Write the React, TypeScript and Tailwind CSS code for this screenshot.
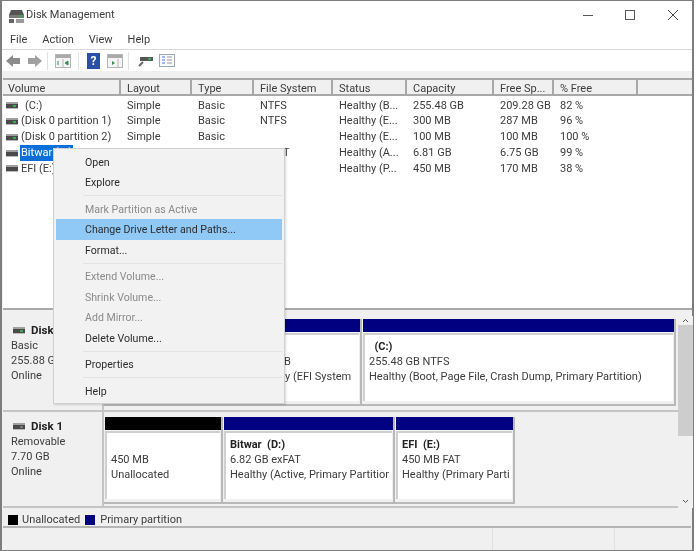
import React from "react";

const font = "[font-family:'Roboto','Noto_Sans',sans-serif]";

function Drive({ led = "#35b04a" }: { led?: string }) {
  return (
    <svg width="12" height="7" viewBox="0 0 12 7" className="shrink-0">
      <rect x="0" y="0" width="12" height="2" fill="#a0a0a0" />
      <rect x="0" y="2" width="12" height="4" fill="#4a4a4a" />
      <rect x="7" y="3" width="3" height="2" fill={led} />
      <rect x="0" y="6" width="12" height="1" fill="#bbb" />
    </svg>
  );
}

const cols = [118, 71, 62, 79, 74, 87, 60, 84];
const heads = ["Volume", "Layout", "Type", "File System", "Status", "Capacity", "Free Sp...", "% Free"];
const rows = [
  ["(C:)", "Simple", "Basic", "NTFS", "Healthy (B...", "255.48 GB", "209.28 GB", "82 %"],
  ["(Disk 0 partition 1)", "Simple", "Basic", "NTFS", "Healthy (E...", "300 MB", "287 MB", "96 %"],
  ["(Disk 0 partition 2)", "Simple", "Basic", "", "Healthy (E...", "100 MB", "100 MB", "100 %"],
  ["Bitwar (D:)", "Simple", "Basic", "exFAT", "Healthy (A...", "6.81 GB", "6.75 GB", "99 %"],
  ["EFI (E:)", "Simple", "Basic", "FAT", "Healthy (P...", "450 MB", "170 MB", "38 %"],
];

function Partition({ w, bar = "bg-[#000080]", title, lines }: { w: number; bar?: string; title?: string; lines: string[] }) {
  return (
    <div style={{ width: w }} className="shrink-0 flex flex-col h-[87px] border-r-2 border-b-2 border-[#b8b8b8]">
      <div className={`h-[13px] ml-[1px] ${bar}`} />
      <div className="flex-1 mt-[1px] mb-[3px] mr-[1px] ml-[1px] border-l-2 border-t-2 border-[#d0d0d0] bg-white pl-[4px] pr-[3px] pt-[4px]">
        <div className="overflow-hidden h-full text-[11px] leading-[15px] whitespace-nowrap text-[#3c3c3c]">
          <div className="h-[15px] font-bold text-[#222] whitespace-pre">{title}</div>
          {lines.map((l) => (
            <div key={l}>{l}</div>
          ))}
        </div>
      </div>
    </div>
  );
}

function DiskRow({ name, info, children, led, pt }: { name: string; info: string[]; children: React.ReactNode; led?: string; pt: string }) {
  return (
    <div className="h-[96px] flex shrink-0">
      <div className="w-[101px] shrink-0 border-r-2 border-b-2 border-[#c4c4c4] bg-[#f0f0f0] pl-[8px] pt-[6px] text-[11px] leading-[15px] text-[#3c3c3c]">
        <div className="flex items-center gap-[6px] h-[16px] pl-[2px] font-bold text-[#222] text-[11.5px]">
          <Drive led={led} />
          <span>{name}</span>
        </div>
        {info.map((l) => (
          <div key={l}>{l}</div>
        ))}
      </div>
      <div className={`flex-1 flex border-b-2 border-[#c4c4c4] ${pt}`}>{children}</div>
    </div>
  );
}

function Item({ children, dim, active }: { children: string; dim?: boolean; active?: boolean }) {
  return (
    <div
      className={`h-[20.500px] leading-[22px] pl-[29px] text-[10.600px] whitespace-nowrap ${dim ? "text-[#8a8a8a]" : "text-[#2c2c2c]"} ${active ? "bg-[#90c8f6]" : ""}`}
    >
      {children}
    </div>
  );
}

function Sep() {
  return <div className="h-[1px] ml-[27px] my-[2.500px] bg-[#e2e2e2]" />;
}

export default function App() {
  return (
    <div className={`w-[696px] h-[551px] bg-white overflow-hidden relative blur-[0.3px] ${font}`}>
      <div className="w-[694px] h-[551px] border-x-2 border-y border-[#7d7d7d] flex flex-col bg-[#f0f0f0]">
        {/* title */}
        <div className="h-[29px] bg-white flex items-center shrink-0 pl-[6px] text-[11px] text-[#3c3c3c]">
          <svg width="17" height="14" viewBox="0 0 17 14" className="mr-[1px]">
            <path d="M3 1h11l2 5H1z" fill="#555" />
            <rect x="1" y="6" width="15" height="3" fill="#7a7a7a" />
            <rect x="11" y="6" width="3" height="2" fill="#35b04a" />
            <rect x="1" y="10" width="5" height="4" fill="#666" />
            <rect x="8" y="10" width="8" height="4" fill="#999" />
          </svg>
          <span>Disk Management</span>
          <div className="ml-auto flex items-center h-full pb-[2px]">
            <svg width="10" height="10" viewBox="0 0 10 10" className="mr-[32px]">
              <path d="M0 5.500h10" stroke="#555" />
            </svg>
            <svg width="10" height="10" viewBox="0 0 10 10" className="mr-[33px]">
              <rect x="0.500" y="0.500" width="9" height="9" fill="none" stroke="#555" />
            </svg>
            <svg width="10" height="10" viewBox="0 0 10 10" className="mr-[14px]">
              <path d="M0 0l10 10M10 0L0 10" stroke="#444" />
            </svg>
          </div>
        </div>
        {/* menu */}
        <div className="h-[20px] bg-white border-b border-[#d9d9d9] flex items-center shrink-0 pl-[8px] gap-[15px] text-[11px] text-[#3c3c3c] pt-[2px]">
          <span>File</span>
          <span>Action</span>
          <span>View</span>
          <span>Help</span>
        </div>
        {/* toolbar */}
        <div className="h-[21px] bg-white flex items-center shrink-0 pl-[3px] relative">
          <svg width="38" height="14" viewBox="0 0 38 14">
            <path d="M1 7l7-6v3h7v6H8v3z" fill="#8c8c8c" />
            <path d="M37 7l-7-6v3h-7v6h7v3z" fill="#a0a0a0" />
          </svg>
          <div className="w-[1px] h-[18px] bg-[#e2e2e2] ml-[4px] mr-[7px]" />
          <svg width="16" height="14" viewBox="0 0 16 14">
            <rect x="0.500" y="0.500" width="15" height="13" fill="#f4f4f4" stroke="#b5b5b5" />
            <rect x="1" y="1" width="14" height="3" fill="#aaa" />
            <path d="M8 5v8" stroke="#b5b5b5" />
            <path d="M3 7v4M13 7l-3 2 3 2z" stroke="#3a8a5a" fill="#3a8a5a" />
          </svg>
          <div className="w-[1px] h-[18px] bg-[#e2e2e2] ml-[7px] mr-[8px]" />
          <div className="w-[13px] h-[16px] bg-[#2a4fa8] text-white text-[12px] leading-[16px] text-center font-bold">?</div>
          <svg width="16" height="14" viewBox="0 0 16 14" className="ml-[7px]">
            <rect x="0.500" y="0.500" width="15" height="13" fill="#f4f4f4" stroke="#b5b5b5" />
            <rect x="1" y="1" width="14" height="3" fill="#aaa" />
            <path d="M11 5v8" stroke="#b5b5b5" />
            <path d="M5 7l3 2-3 2z" fill="#3a8a5a" />
          </svg>
          <div className="w-[1px] h-[18px] bg-[#e2e2e2] ml-[5px] mr-[9px]" />
          <svg width="15" height="14" viewBox="0 0 15 14">
            <rect x="2" y="3" width="13" height="4" fill="#555" />
            <rect x="10" y="4" width="3" height="2" fill="#35b04a" />
            <path d="M5 8L1 12" stroke="#666" strokeWidth="2" />
          </svg>
          <svg width="16" height="14" viewBox="0 0 16 14" className="ml-[6px]">
            <rect x="0.500" y="0.500" width="15" height="12" fill="#fafafa" stroke="#9ab" />
            <path d="M3 3h3M3 6h3M3 9h3" stroke="#3a7fc8" />
            <path d="M8 3h5M8 6h5M8 9h5" stroke="#999" />
          </svg>
        </div>
        {/* list */}
        <div className="h-[239px] shrink-0 bg-[#f0f0f0] pt-[7px] pl-[1px] flex flex-col">
          <div className="flex-1 bg-white border-b-2 border-[#a8a8a8] overflow-hidden">
            <div className="flex h-[18px] bg-[#f0f0f0] border-t-2 border-b-2 border-[#a8a8a8]">
              {cols.map((w, i) => (
                <div
                  key={i}
                  style={{ width: w }}
                  className={`shrink-0 border-r-2 border-[#a8a8a8] ${i === 0 ? "pl-[5px]" : "pl-[6px]"} text-[11px] leading-[17px] text-[#3c3c3c] whitespace-nowrap`}
                >
                  {heads[i]}
                </div>
              ))}
            </div>
            <div className="pt-[2px]">
              {rows.map((r, j) => (
                <div key={j} className="flex h-[15.750px] items-center text-[11px] text-[#3c3c3c] whitespace-nowrap">
                  {r.map((c, i) => (
                    <div key={i} style={{ width: cols[i] }} className={`shrink-0 flex items-center ${i === 0 ? "pl-[3px]" : "pl-[6px]"}`}>
                      {i === 0 ? (
                        <>
                          <Drive led={j === 3 || j === 4 ? "#4a4a4a" : "#35b04a"} />
                          <span
                            className={`${j === 0 ? "ml-[7px]" : j === 3 ? "ml-[2px]" : "ml-[3px]"} ${j === 3 ? "bg-[#0a6fd8] text-white px-[1px]" : ""}`}
                          >
                            {c}
                          </span>
                        </>
                      ) : (
                        c
                      )}
                    </div>
                  ))}
                </div>
              ))}
            </div>
          </div>
        </div>
        {/* graphical pane */}
        <div className="flex shrink-0 pl-[1px] pt-[6px]">
          <div className="w-[675px] shrink-0 flex flex-col">
            <DiskRow name="Disk 0" pt="pt-[3px]" info={["Basic", "255.88 GB", "Online"]}>
              <Partition w={142} lines={[]} />
              <Partition w={116} lines={["300 MB", "Healthy (EFI System"]} />
              <Partition w={314} title="  (C:)" lines={["255.48 GB NTFS", "Healthy (Boot, Page File, Crash Dump, Primary Partition)"]} />
            </DiskRow>
            <DiskRow name="Disk 1" pt="pt-[5px]" led="#777" info={["Removable", "7.70 GB", "Online"]}>
              <Partition w={119} bar="bg-black" lines={["450 MB", "Unallocated"]} />
              <Partition w={172} title="Bitwar  (D:)" lines={["6.82 GB exFAT", "Healthy (Active, Primary Partition)"]} />
              <Partition w={120} title="EFI  (E:)" lines={["450 MB FAT", "Healthy (Primary Partition)"]} />
            </DiskRow>
          </div>
          <div className="w-[15px] shrink-0 flex flex-col bg-[#f0f0f0] h-[192px]">
            <svg width="15" height="9" viewBox="0 0 15 9" className="shrink-0">
              <path d="M5 6l2.500-2.500L10 6" stroke="#555" fill="none" />
            </svg>
            <div className="h-[111px] bg-[#cdcdcd] shrink-0" />
            <div className="flex-1" />
            <svg width="15" height="9" viewBox="0 0 15 9" className="shrink-0 mb-[2px]">
              <path d="M5 3l2.500 2.500L10 3" stroke="#555" fill="none" />
            </svg>
          </div>
        </div>
        {/* legend */}
        <div className="h-[20px] shrink-0 ml-[1px] mr-[1px] flex items-center pl-[5px] pt-[6px] text-[11px] text-[#3c3c3c] border-b-2 border-[#b4b4b4]">
          <div className="w-[10px] h-[10px] bg-black mr-[4px]" />
          <span>Unallocated</span>
          <div className="w-[10px] h-[10px] bg-[#000080] ml-[5px] mr-[5px]" />
          <span>Primary partition</span>
        </div>
        <div className="flex-1 flex justify-end">
          <div className="w-[122px] border-l border-[#e0e0e0]" />
          <div className="w-[78px] border-l border-[#e0e0e0]" />
        </div>
      </div>
      {/* context menu */}
      <div className="absolute left-[53px] top-[148px] w-[232px] h-[256px] bg-[#f2f2f2] border border-[#d0d0d0] shadow-[1px_1px_2px_rgba(0,0,0,0.15)] px-[2px] pt-[2.500px]">
        <Item>Open</Item>
        <Item>Explore</Item>
        <Sep />
        <Item dim>Mark Partition as Active</Item>
        <Item active>Change Drive Letter and Paths...</Item>
        <Item>Format...</Item>
        <Sep />
        <Item dim>Extend Volume...</Item>
        <Item dim>Shrink Volume...</Item>
        <Item dim>Add Mirror...</Item>
        <Item>Delete Volume...</Item>
        <Sep />
        <Item>Properties</Item>
        <Sep />
        <Item>Help</Item>
      </div>
    </div>
  );
}
